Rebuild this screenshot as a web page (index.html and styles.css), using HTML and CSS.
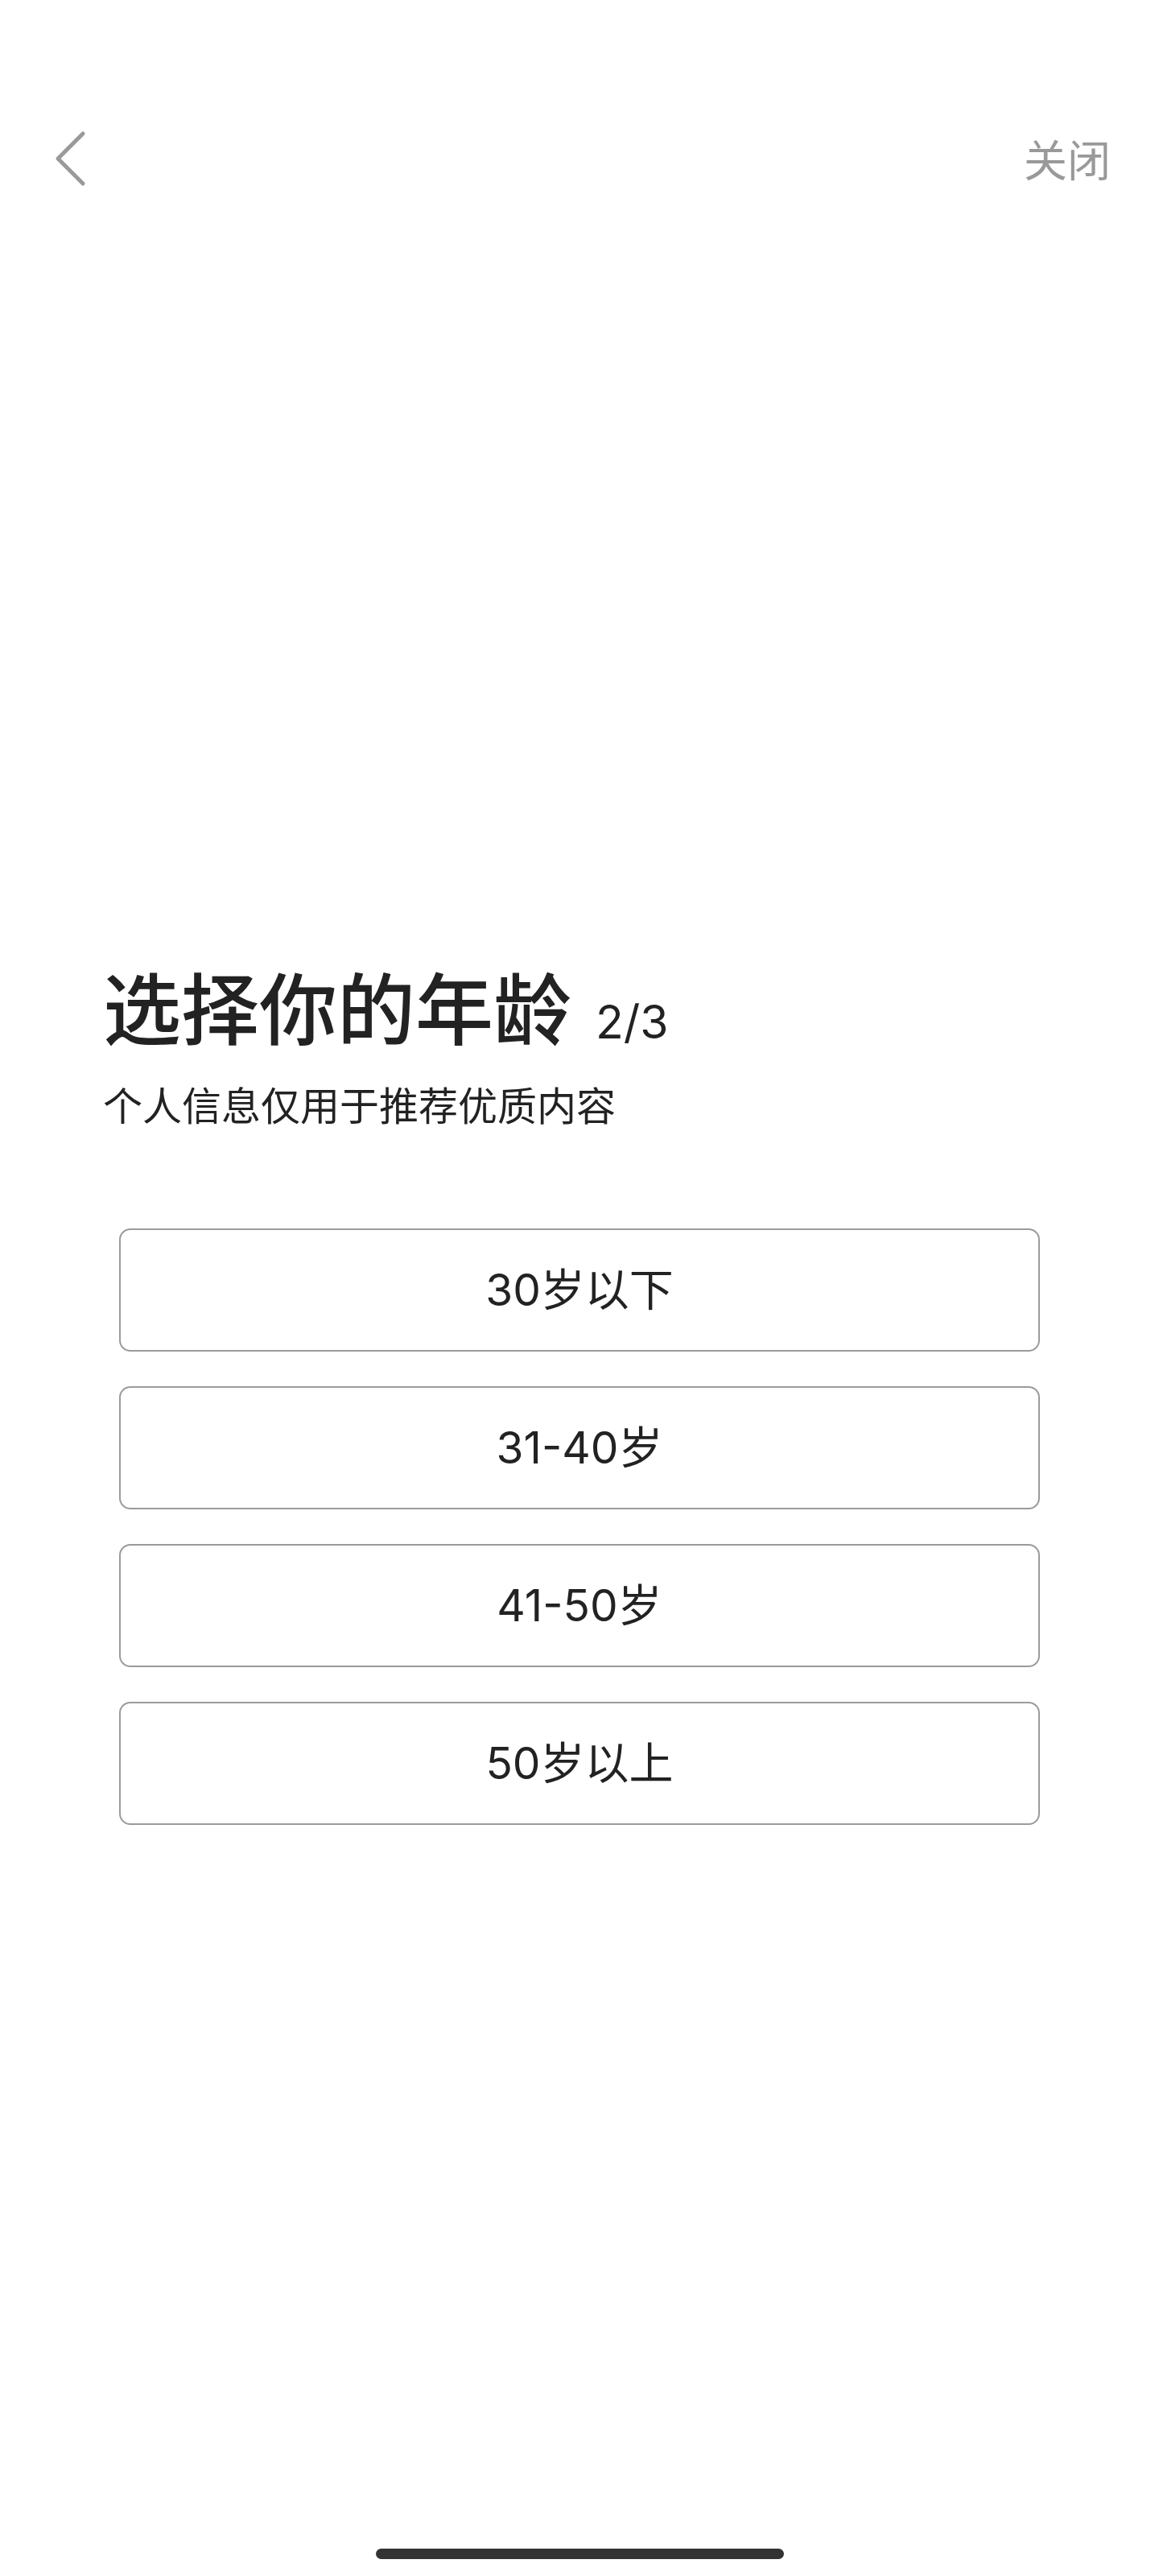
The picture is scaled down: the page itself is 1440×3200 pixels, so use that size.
FILE: index.html
```html
<!DOCTYPE html>
<html lang="zh-CN">
<head>
<meta charset="utf-8">
<title>选择你的年龄</title>
<link rel="stylesheet" href="styles.css">
</head>
<body>
<div class="page">
  <header class="topbar">
    <svg class="back" width="40" height="70" viewBox="0 0 40 70" aria-label="返回">
      <path d="M35 4 L4 35 L35 66" fill="none" stroke="#9a9a9a" stroke-width="5" stroke-linecap="round" stroke-linejoin="round"/>
    </svg>
    <span class="close">关闭</span>
  </header>
  <main class="content">
    <div class="title-row">
      <h1 class="title">选择你的年龄</h1>
      <span class="step">2/3</span>
    </div>
    <p class="subtitle">个人信息仅用于推荐优质内容</p>
    <div class="options">
      <div class="option">30岁以下</div>
      <div class="option">31-40岁</div>
      <div class="option">41-50岁</div>
      <div class="option">50岁以上</div>
    </div>
  </main>
  <div class="home-indicator"></div>
</div>
</body>
</html>
```
FILE: styles.css
```css
html, body {
  margin: 0;
  padding: 0;
  background: #ffffff;
}
body {
  font-family: "Noto Sans CJK SC", "Noto Sans", sans-serif;
  color: #222222;
}
.page {
  width: 1440px;
  min-height: 3200px;
  display: flex;
  flex-direction: column;
}
.topbar {
  margin-top: 137px;
  height: 120px;
  display: flex;
  align-items: center;
  justify-content: space-between;
  padding: 0 60px 0 68px;
}
.back {
  display: block;
}
.close {
  font-size: 54px;
  line-height: 1;
  color: #999999;
}
.content {
  margin-top: 942px;
  display: flex;
  flex-direction: column;
}
.title-row {
  display: flex;
  align-items: baseline;
  padding-left: 128px;
}
.title {
  margin: 0;
  font-size: 97px;
  line-height: 1;
  font-weight: 500;
  color: #222222;
}
.step {
  margin-left: 30px;
  font-family: Inter, "Noto Sans CJK SC", sans-serif;
  font-size: 57px;
  line-height: 1;
  color: #222222;
}
.subtitle {
  margin: 48px 0 0;
  padding-left: 128px;
  font-size: 49px;
  line-height: 1;
  color: #222222;
}
.options {
  margin: 131px auto 0;
  width: 1144px;
  display: flex;
  flex-direction: column;
  gap: 43px;
}
.option {
  box-sizing: border-box;
  height: 153px;
  border: 2px solid #9b9b9b;
  border-radius: 14px;
  display: flex;
  align-items: center;
  justify-content: center;
  font-family: Inter, "Noto Sans CJK SC", sans-serif;
  font-size: 55px;
  line-height: 1;
  color: #222222;
}
.home-indicator {
  margin: auto auto 21px;
  width: 507px;
  height: 13px;
  border-radius: 7px;
  background: #333333;
}
```
